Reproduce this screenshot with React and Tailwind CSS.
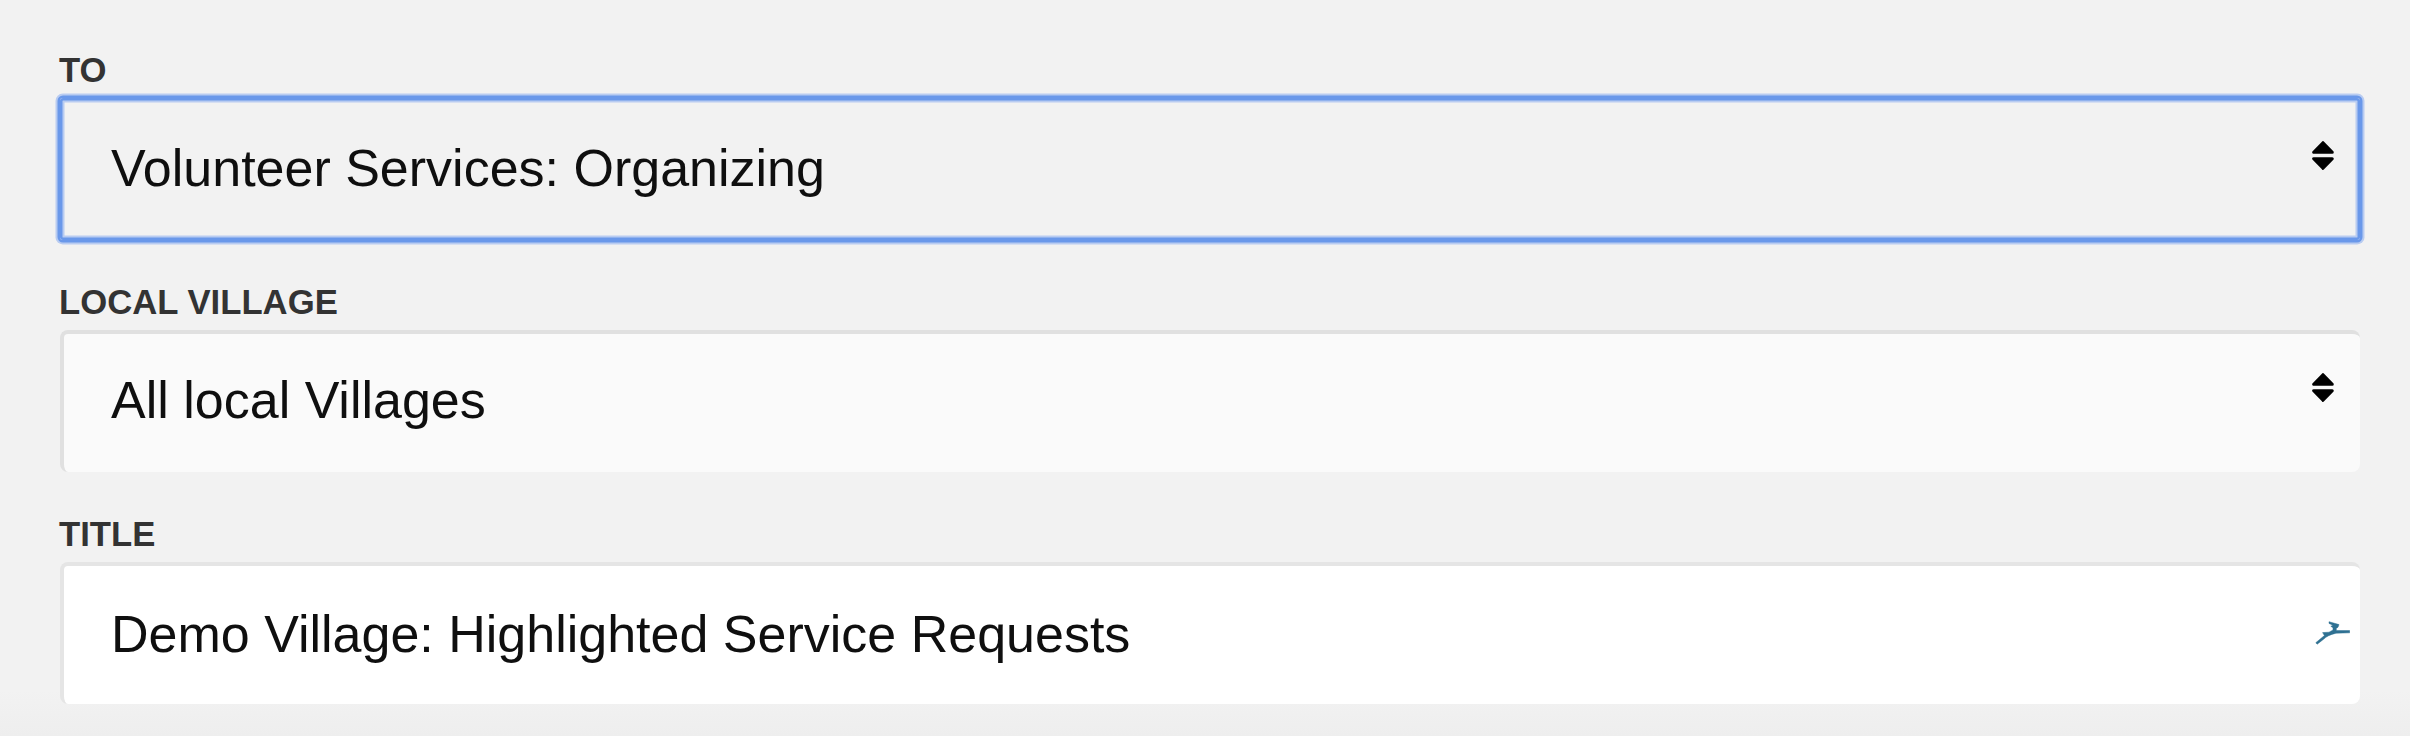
import clsx from 'clsx';

const SelectArrows = () => (
  <svg
    className="pointer-events-none h-[29px] w-[22px]"
    viewBox="0 0 22 29"
    fill="black"
    stroke="black"
    strokeWidth="3"
    strokeLinejoin="round"
  >
    <path d="M11 1.7 1.7 11.3H20.3Z" />
    <path d="M11 27.3 1.7 17.7H20.3Z" />
  </svg>
);

const BirdIcon = () => (
  <svg
    className="pointer-events-none h-[24px] w-[35px]"
    viewBox="0 0 35 24"
    fill="#2f7192"
    stroke="#2f7192"
    strokeWidth="0.5"
  >
    <path d="M14 0.7 24 3.6 23 6.2 21.2 7.4 21.4 9.6 34.7 9.6V11.8L21 12.2C15 13.6 11.5 15.4 8.6 18.2L2.2 23.2 0.8 21.7 9.4 14.6 7.6 11.6 14 11.2 18 9 18 6.8 15.8 5.2 18 4.2 14 2.4Z" />
  </svg>
);

const fields = [
  { id: 'to', label: 'To', value: 'Volunteer Services: Organizing', type: 'select', focused: true },
  { id: 'village', label: 'Local Village', value: 'All local Villages', type: 'select' },
  { id: 'title', label: 'Title', value: 'Demo Village: Highlighted Service Requests', type: 'text' },
];

const Field = ({ label, value, type, focused }) => {
  const isSelect = type === 'select';

  return (
    <div className="flex flex-col">
      <label className="-ml-px h-[48px] text-[34.7px] leading-[40px] font-bold text-[#333333] uppercase">{label}</label>
      <div
        className={clsx(
          'flex h-[142px] items-start justify-between text-[52px] leading-[60px] text-[#0f0f0f]',
          focused &&
            'rounded-[3px] bg-[#f2f2f2] pl-[51px] shadow-[0_0_0_2.5px_#6a98ea,0_0_0_4.5px_#b9ccf1,inset_0_0_0_2.5px_#6a98ea,inset_0_0_0_4.5px_#b9ccf1]',
          !focused && 'rounded-lg border-t-4 border-l-4 pl-[47px]',
          !focused && isSelect && 'border-[#e0e0e0] bg-[#fafafa]',
          !focused && !isSelect && 'border-[#e5e5e5] bg-white',
          isSelect ? 'pr-[26px]' : 'pr-[10px]'
        )}
      >
        <span className={clsx(focused && 'mt-[40px]', !focused && isSelect && 'mt-[36px]', !isSelect && 'mt-[38px]')}>
          {value}
        </span>
        <span className={clsx('flex', focused && 'mt-[43px]', !focused && isSelect && 'mt-[39px]', !isSelect && 'mt-[55px]')}>
          {isSelect ? <SelectArrows /> : <BirdIcon />}
        </span>
      </div>
    </div>
  );
};

const App = () => {
  return (
    <div className="flex h-[736px] w-full flex-col bg-[linear-gradient(#f2f2f2_690px,#eeeeee_736px)] pr-[50px] pl-[60px] font-['Liberation_Sans',Arial,sans-serif]">
      <form className="flex flex-col gap-[42px] pt-[50px]">
        {fields.map((field) => (
          <Field key={field.id} {...field} />
        ))}
      </form>
    </div>
  );
};

export default App;
